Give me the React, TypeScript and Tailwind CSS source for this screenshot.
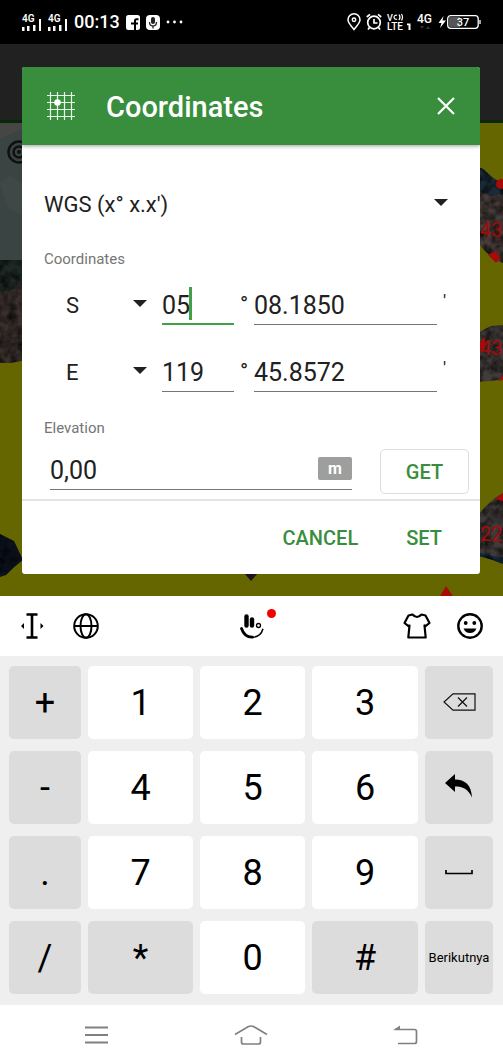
import type { ReactNode } from "react";
import { useState } from "react";

const ROBOTO = "font-[Roboto,'Liberation_Sans',sans-serif]";

function Signal() {
  return (
    <svg width="20" height="20" viewBox="0 -2 20 20" fill="#fff" className="overflow-visible">
      <text x="0" y="8" fontSize="10" fontWeight="600" fontFamily="Roboto, sans-serif">
        4G
      </text>
      <path d="M0 13h2.500v4H0zM5 12h2.500v5H5zM11 11h2.500v6H11zM17 5h2v12h-2z" />
    </svg>
  );
}

function StatusBar() {
  return (
    <header className="flex h-11 items-center justify-between bg-black pr-[22px] pl-[22px] text-white">
      <div className="flex items-center gap-[6px]">
        <Signal />
        <Signal />
        <span className="text-lg leading-6 font-medium">00:13</span>
        <svg width="14" height="15" viewBox="0 0 14 15">
          <rect width="14" height="15" rx="2.500" fill="#fff" />
          <path d="M12.500 4.300H10.500Q9 4.300 9 5.800V15M5 8.500h7" stroke="#000" strokeWidth="2" fill="none" />
        </svg>
        <svg width="14" height="15" viewBox="0 0 14 15">
          <rect width="14" height="15" rx="4" fill="#fff" />
          <rect x="5" y="2" width="4" height="7" rx="2" fill="#222" />
          <path d="M3.500 7q0 4 3.500 4t3.500-4M7 11v2.500" stroke="#222" strokeWidth="1.300" fill="none" />
        </svg>
        <svg width="18" height="4" viewBox="0 0 18 4" fill="#fff">
          <circle cx="2" cy="2" r="1.400" />
          <circle cx="8.500" cy="2" r="1.400" />
          <circle cx="15" cy="2" r="1.400" />
        </svg>
      </div>
      <div className="flex items-center gap-[5px]">
        <svg width="14" height="18" viewBox="0 0 14 18" fill="none" stroke="#fff" strokeWidth="1.500">
          <path d="M7 16.500C4 12.500 1 10 1 6.800a6 6 0 0 1 12 0C13 10 10 12.500 7 16.500z" />
          <circle cx="7" cy="6.800" r="1.700" />
        </svg>
        <svg width="16" height="18" viewBox="0 0 16 18" fill="none" stroke="#fff" strokeWidth="1.700">
          <circle cx="8" cy="9.500" r="6.300" />
          <path d="M8 6v4h3.500M.8 4 4 1.300M15.200 4 12 1.300M3.500 14.500 2 16.500M12.500 14.500l1.500 2" />
        </svg>
        <svg
          width="25"
          height="20"
          viewBox="0 -1 25 20"
          fill="#fff"
          fontFamily="Roboto, sans-serif"
          fontWeight="500"
          className="overflow-visible"
        >
          <text x="0" y="7.500" fontSize="9">V</text>
          <path d="M10 2.500a2 2 0 1 0 0 3.500M12 1.500q2 2.700 0 5.500M14.500 1q2 3 0 6.500" fill="none" stroke="#fff" strokeWidth="1.200" />
          <text x="0" y="17" fontSize="10">LTE</text>
          <path d="M20 10.500h3.500V17h-2v-4.800H20z" />
        </svg>
        <svg width="16" height="22" viewBox="0 -3 16 22" fill="#fff" className="overflow-visible">
          <text x="0" y="9" fontSize="12" fontWeight="500" fontFamily="Roboto, sans-serif">
            4G
          </text>
          <path d="M3 12h4l-2 3zM9 15h4l-2-3z" fill="#333" />
        </svg>
        <svg width="43" height="16" viewBox="0 0 43 16">
          <path d="M5.500 2 .5 9h3l-1.500 5L8 6.500H4.500z" fill="#fff" />
          <rect x="9.700" y="1.700" width="30.500" height="12.600" rx="3" fill="none" stroke="#fff" strokeWidth="1.300" />
          <path d="M12 3h10v10H12q-1.500 0-1.500-2V5q0-2 1.500-2z" fill="#555" />
          <path d="M42 6v4" stroke="#fff" strokeWidth="1.300" />
          <text x="25" y="12" textAnchor="middle" fontSize="11" fontWeight="500" fill="#fff" fontFamily="Roboto, sans-serif">
            37
          </text>
        </svg>
      </div>
    </header>
  );
}

function MapBackdrop() {
  return (
    <div className="absolute inset-0 flex flex-col" aria-hidden="true">
      <div className="h-[79px] border-b-[3px] border-[#06290a] bg-[#212121]" />
      <svg className="w-full flex-1" viewBox="0 0 503 473" preserveAspectRatio="xMidYMin slice">
        <defs>
          <filter id="grain" x="0" y="0" width="1" height="1" colorInterpolationFilters="sRGB">
            <feTurbulence type="fractalNoise" baseFrequency="0.120" numOctaves="3" seed="4" />
            <feColorMatrix values="0 0 0 0 0  0 0 0 0 0  0 0 0 0 0  1.400 0 0 0 -0.450" />
            <feComposite in2="SourceGraphic" operator="in" result="noise" />
            <feMerge>
              <feMergeNode in="SourceGraphic" />
              <feMergeNode in="noise" />
            </feMerge>
          </filter>
        </defs>
        <rect width="503" height="473" fill="#666600" />
        <path d="M0 0h30v137H0z" fill="#3a4443" />
        <path d="M0 0h24v5L0 16z" fill="#464644" />
        <path d="M0 60l10-8 14 10v30L8 86z" fill="#3f4846" />
        <g filter="url(#grain)">
          <path d="M0 137h30v100l-8 1-12 2H0z" fill="#3a302d" />
          <path d="M0 137h30v24l-12 1-8 6H0z" fill="#1e2926" />
          <path d="M475 43l8 3 10 9 10 6v79l-8-3-10-9-10-12z" fill="#463c3a" />
          <path d="M475 43l8 3 10 9 10 6v10l-12 2-16-6z" fill="#1c2b38" />
          <path d="M475 212l10-6 6-3 12-1v54l-12 2-16 1z" fill="#413c3a" />
          <path d="M475 396l10-12 10-9 8-5v71l-10-4-18-8z" fill="#403b3a" />
          <path d="M475 428l16 5 12 1v7l-10-4-18-5z" fill="#122a3d" />
          <path d="M0 411l14 7 9 19-10 8-7 7-6 2z" fill="#0d1420" />
        </g>
        <g fill="none" stroke="#101010" strokeWidth="2.500">
          <circle cx="19" cy="29" r="10.500" />
          <circle cx="19" cy="29" r="5.500" />
        </g>
        <circle cx="19" cy="29" r="2" fill="#101010" />
        <g fill="#a80a08">
          <circle cx="501" cy="61" r="5" />
          <path d="M488 132l8-4 4 8-4 4zM480 219l5-5v11l-5 4zM495 376l8-6v8zM498 258l5-6v5z" />
          <path d="M440 473l6-10 7 10z" />
          <g fontSize="20" fontFamily="Roboto, sans-serif">
            <text x="480" y="114">43</text>
            <text x="480" y="232">43</text>
            <text x="480" y="418">22</text>
          </g>
        </g>
        <path d="M244 450h14l-7 8z" fill="#1d1422" />
      </svg>
    </div>
  );
}

function Caret({ className }: { className: string }) {
  return (
    <svg
      className={`pointer-events-none absolute top-[15px] ${className}`}
      width="14"
      height="7"
      viewBox="0 0 14 7"
      fill="#212121"
    >
      <path d="M0 0h14L7 7z" />
    </svg>
  );
}

interface AxisRowProps {
  axis: string;
  options: string[];
  degrees: string;
  minutes: string;
  focused?: boolean;
}

function AxisRow({ axis, options, degrees, minutes, focused }: AxisRowProps) {
  const [deg, setDeg] = useState(degrees);
  const [min, setMin] = useState(minutes);

  return (
    <div className="flex h-10 pr-[11px] text-[25px]">
      <div className="relative w-[118px] shrink-0">
        <select
          aria-label={`Hemisphere ${axis}`}
          defaultValue={axis}
          className="h-10 w-full appearance-none bg-transparent pl-[22px] text-[22px] outline-none"
        >
          {options.map((o) => (
            <option key={o}>{o}</option>
          ))}
        </select>
        <Caret className="right-[15px]" />
      </div>
      <div className="relative w-[72px] shrink-0">
        <input
          aria-label={`Degrees ${axis}`}
          value={deg}
          onChange={(e) => setDeg(e.target.value)}
          className={`h-10 w-full bg-transparent pt-[2px] outline-none ${
            focused ? "border-b-2 border-[#43a047]" : "border-b border-[#757575]"
          }`}
        />
        {focused && <span className="absolute top-[2px] left-[27px] h-[33px] w-[3px] bg-[#43a047]" />}
      </div>
      <span className="w-5 shrink-0 pt-[3px] text-center text-[22px]">°</span>
      <input
        aria-label={`Minutes ${axis}`}
        value={min}
        onChange={(e) => setMin(e.target.value)}
        className="h-10 min-w-0 flex-1 border-b border-[#757575] bg-transparent pt-[2px] outline-none"
      />
      <span className="w-[21px] shrink-0 pt-[3px] pl-[6px] text-lg">'</span>
    </div>
  );
}

function CoordinatesDialog() {
  return (
    <div role="dialog" aria-labelledby="title" className="relative overflow-hidden rounded-[3px] bg-white text-[#212121]">
      <div className="relative flex h-[78px] items-center bg-[#388e3c] pr-[25px] pl-[25px] text-white shadow-[0_1px_4px_rgba(0,0,0,0.4)]">
        <svg width="28" height="28" viewBox="0 0 28 28" fill="none" stroke="#e8f5e9" strokeWidth="1.200">
          <path d="M3.500 0v28M10.500 0v28M17.500 0v28M24.500 0v28M0 3.500h28M0 10.500h28M0 17.500h28M0 24.500h28" />
          <circle cx="10.500" cy="10.500" r="3.300" fill="#fff" stroke="none" />
        </svg>
        <h1 id="title" className="flex-1 pt-[2px] pl-[31px] text-[29px] leading-9 font-medium">
          Coordinates
        </h1>
        <button aria-label="Close">
          <svg width="18" height="18" viewBox="0 0 18 18" stroke="#fff" strokeWidth="2.200">
            <path d="M1 1l16 16M17 1 1 17" />
          </svg>
        </button>
      </div>

      <div className="pt-[39px] pr-[11px] pb-[5px] pl-[22px]">
        <div className="relative mr-[11px]">
          <select
            aria-label="Format"
            className="h-10 w-full appearance-none bg-transparent text-[22px] outline-none"
          >
            <option>WGS (x° x.x')</option>
          </select>
          <Caret className="right-[10px]" />
        </div>
        <h2 className="mt-[25px] text-[15px] leading-5 text-[#757575]">Coordinates</h2>
        <div className="mt-4 flex flex-col gap-[27px]">
          <AxisRow axis="S" options={["N", "S"]} degrees="05" minutes="08.1850" focused />
          <AxisRow axis="E" options={["E", "W"]} degrees="119" minutes="45.8572" />
        </div>
        <label htmlFor="elevation" className="mt-[26px] block text-[15px] leading-5 text-[#757575]">
          Elevation
        </label>
        <div className="mt-[11px] flex gap-7 pl-[6px]">
          <div className="relative flex-1">
            <input
              id="elevation"
              defaultValue="0,00"
              className="h-[41px] w-full border-b border-[#757575] bg-transparent pt-[2px] text-[25px] outline-none"
            />
            <span className="absolute top-2 right-0 flex h-[23px] w-[34px] items-center justify-center rounded-[2px] bg-[#9e9e9e] text-base font-bold text-white">
              m
            </span>
          </div>
          <button className="h-[45px] w-[89px] rounded-[5px] border border-[#dcdcdc] text-xl font-medium text-[#388e3c]">
            GET
          </button>
        </div>
      </div>

      <div className="flex h-[75px] items-center justify-end gap-12 border-t-2 border-[#e4e4e4] pr-[38px] text-xl font-medium text-[#388e3c]">
        <button>CANCEL</button>
        <button>SET</button>
      </div>
    </div>
  );
}

function KeyboardToolbar() {
  return (
    <div className="flex h-[60px] items-center bg-white px-5">
      <div className="flex flex-1 items-center gap-[29px]">
        <button aria-label="Move cursor">
          <svg width="24" height="26" viewBox="0 0 24 26">
            <path d="M6.500 1.500h11M6.500 24.500h11M12 1v24" stroke="#000" strokeWidth="2.600" />
            <path d="M1 13l3-3v6zM23.500 13l-3-3v6z" />
          </svg>
        </button>
        <button aria-label="Language">
          <svg width="26" height="26" viewBox="0 0 26 26" fill="none" stroke="#000" strokeWidth="2">
            <circle cx="13" cy="13" r="11.800" />
            <ellipse cx="13" cy="13" rx="5.500" ry="11.800" />
            <path d="M1 13h24" />
          </svg>
        </button>
      </div>
      <button aria-label="Keyboard menu" className="relative">
        <svg width="24" height="26" viewBox="0 0 24 26" fill="none" stroke="#000">
          <path d="M6.500 3.500v9" strokeWidth="4.400" strokeLinecap="round" />
          <path d="M12 6.500v6" strokeWidth="4.400" strokeLinecap="round" />
          <circle cx="18.500" cy="12.500" r="2" strokeWidth="1.300" />
          <path d="M1.500 15.500q3 9 11 8.700" strokeWidth="2.800" strokeLinecap="round" />
          <path d="M12.500 24.200q8 0 10.500-8.500" strokeWidth="1.500" />
        </svg>
        <span className="absolute -top-1 -right-3 size-[9px] rounded-full bg-[#f40000]" />
      </button>
      <div className="flex flex-1 items-center justify-end gap-[26px]">
        <button aria-label="Themes">
          <svg width="28" height="26" viewBox="0 0 28 26" fill="none" stroke="#000" strokeWidth="2.200" strokeLinejoin="round">
            <path d="M9.500 1.500q4.500 5 9 0l4 1 4 7.500-4 3.200-1-.7 1.200 12H5.300l1.200-12-1 .7-4-3.200 4-7.500z" />
          </svg>
        </button>
        <button aria-label="Emoji">
          <svg width="26" height="26" viewBox="0 0 26 26">
            <circle cx="13" cy="13" r="11.700" fill="none" stroke="#000" strokeWidth="2.400" />
            <circle cx="8.700" cy="10" r="1.900" />
            <circle cx="17.300" cy="10" r="1.900" />
            <path d="M6.500 15.500h13q-2 4.500-6.500 4.500t-6.500-4.500z" />
          </svg>
        </button>
      </div>
    </div>
  );
}

interface Key {
  name: string;
  face?: ReactNode;
  light?: boolean;
  small?: boolean;
}

const KEYS: Key[] = [
  { name: "+" },
  { name: "1", light: true },
  { name: "2", light: true },
  { name: "3", light: true },
  {
    name: "Backspace",
    face: (
      <svg width="33" height="20" viewBox="0 0 33 20" fill="none" stroke="#111">
        <path d="M10 .8h22v16.400H10L1 9z" strokeWidth="1.200" />
        <path d="M15 4.500l9 9M24 4.500l-9 9" strokeWidth="1.200" />
      </svg>
    ),
  },
  { name: "-" },
  { name: "4", light: true },
  { name: "5", light: true },
  { name: "6", light: true },
  {
    name: "Enter",
    face: (
      <svg width="28" height="28" viewBox="0 0 28 28">
        <path d="M0 9 10 0v5.500C20 5.500 26.500 11 27 23.500 23 15 18 12.500 10 12.500V18z" />
      </svg>
    ),
  },
  { name: "." },
  { name: "7", light: true },
  { name: "8", light: true },
  { name: "9", light: true },
  {
    name: "Space",
    face: (
      <svg width="28" height="8" viewBox="0 0 28 8" fill="none" stroke="#000" strokeWidth="1.700">
        <path d="M1 1v3.500h26V1" />
      </svg>
    ),
  },
  { name: "/" },
  { name: "*" },
  { name: "0", light: true },
  { name: "#" },
  { name: "Berikutnya", small: true },
];

function Keypad() {
  return (
    <div className="grid grid-cols-[72fr_105fr_105fr_106fr_68fr] gap-x-[7px] gap-y-3 bg-[#efefef] pt-[10px] pr-[10px] pb-[11px] pl-[9px] text-black">
      {KEYS.map((k) => (
        <button
          key={k.name}
          aria-label={k.name}
          className={`flex h-[73px] min-w-0 items-center justify-center rounded-[5px] ${
            k.light ? "bg-white" : "bg-[#dcdcdc]"
          } ${k.small ? "text-[13px]" : "text-4xl"}`}
        >
          {k.face ?? k.name}
        </button>
      ))}
    </div>
  );
}

function NavBar() {
  return (
    <nav className="grid h-[59px] grid-cols-3 place-items-center bg-white px-5">
      <button aria-label="Recent apps">
        <svg width="24" height="18" viewBox="0 0 24 18" stroke="#808080" strokeWidth="2">
          <path d="M0 1.500h23M0 9h23M0 16.500h23" />
        </svg>
      </button>
      <button aria-label="Home">
        <svg width="34" height="20" viewBox="0 0 34 20" fill="none" stroke="#808080" strokeWidth="1.700">
          <path d="M1 9.500 14.500 1.500q2.500-1 5 0L33 9.500M7.500 12v5q0 2 2 2h15q2 0 2-2v-5" />
        </svg>
      </button>
      <button aria-label="Back">
        <svg width="25" height="20" viewBox="0 0 25 20" fill="none" stroke="#808080" strokeWidth="1.700">
          <path d="M2 4.500h19.500q2 0 2 2v10q0 2-2 2H5" />
          <path d="M0 5.300 7 .5v4z" fill="#808080" stroke="none" />
        </svg>
      </button>
    </nav>
  );
}

export default function App() {
  return (
    <div className={`min-h-screen bg-white ${ROBOTO}`}>
      <StatusBar />
      <main className="relative pt-[23px] pr-[23px] pb-[22px] pl-[22px]">
        <MapBackdrop />
        <CoordinatesDialog />
      </main>
      <KeyboardToolbar />
      <Keypad />
      <NavBar />
    </div>
  );
}
